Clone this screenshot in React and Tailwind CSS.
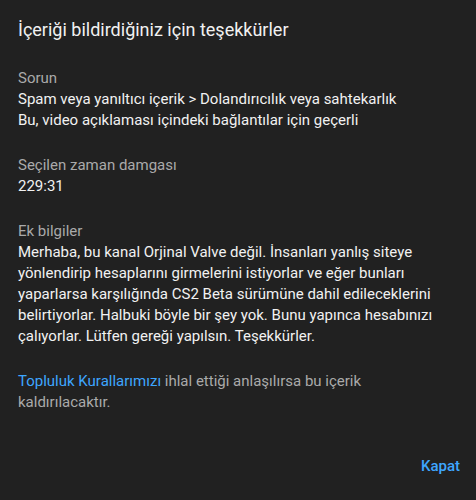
import React from 'react';

const Section = ({ label, children }) => (
  <div className="mt-6">
    <div className="text-[#aaaaaa]">{label}</div>
    <div className="text-[#f1f1f1]">{children}</div>
  </div>
);

const App = () => {
  return (
    <div className="h-[500px] w-[476px] bg-[#212121] font-['Roboto',sans-serif] text-[15px] leading-[21px]">
      <div className="flex h-full flex-col">
        <div className="pl-[18px] pr-6 pt-4">
          <h2 className="text-[18px] leading-[28px] text-[#f1f1f1]">
            İçeriği bildirdiğiniz için teşekkürler
          </h2>

          <Section label="Sorun">
            <div>Spam veya yanıltıcı içerik &gt; Dolandırıcılık veya sahtekarlık</div>
            <div>Bu, video açıklaması içindeki bağlantılar için geçerli</div>
          </Section>

          <Section label="Seçilen zaman damgası">229:31</Section>

          <Section label="Ek bilgiler">
            Merhaba, bu kanal Orjinal Valve değil. İnsanları yanlış siteye yönlendirip hesaplarını
            girmelerini istiyorlar ve eğer bunları yaparlarsa karşılığında CS2 Beta sürümüne dahil
            edileceklerini belirtiyorlar. Halbuki böyle bir şey yok. Bunu yapınca hesabınızı
            çalıyorlar. Lütfen gereği yapılsın. Teşekkürler.
          </Section>

          <p className="mt-6 text-[#aaaaaa]">
            <a className="text-[#3ea6ff]">Topluluk Kurallarımızı</a> ihlal ettiği anlaşılırsa bu
            içerik kaldırılacaktır.
          </p>
        </div>

        <div className="mt-auto flex justify-end px-2 pb-4">
          <button className="px-2 py-2 text-[15px] font-medium leading-[20px] text-[#3ea6ff]">
            Kapat
          </button>
        </div>
      </div>
    </div>
  );
};

export default App;
